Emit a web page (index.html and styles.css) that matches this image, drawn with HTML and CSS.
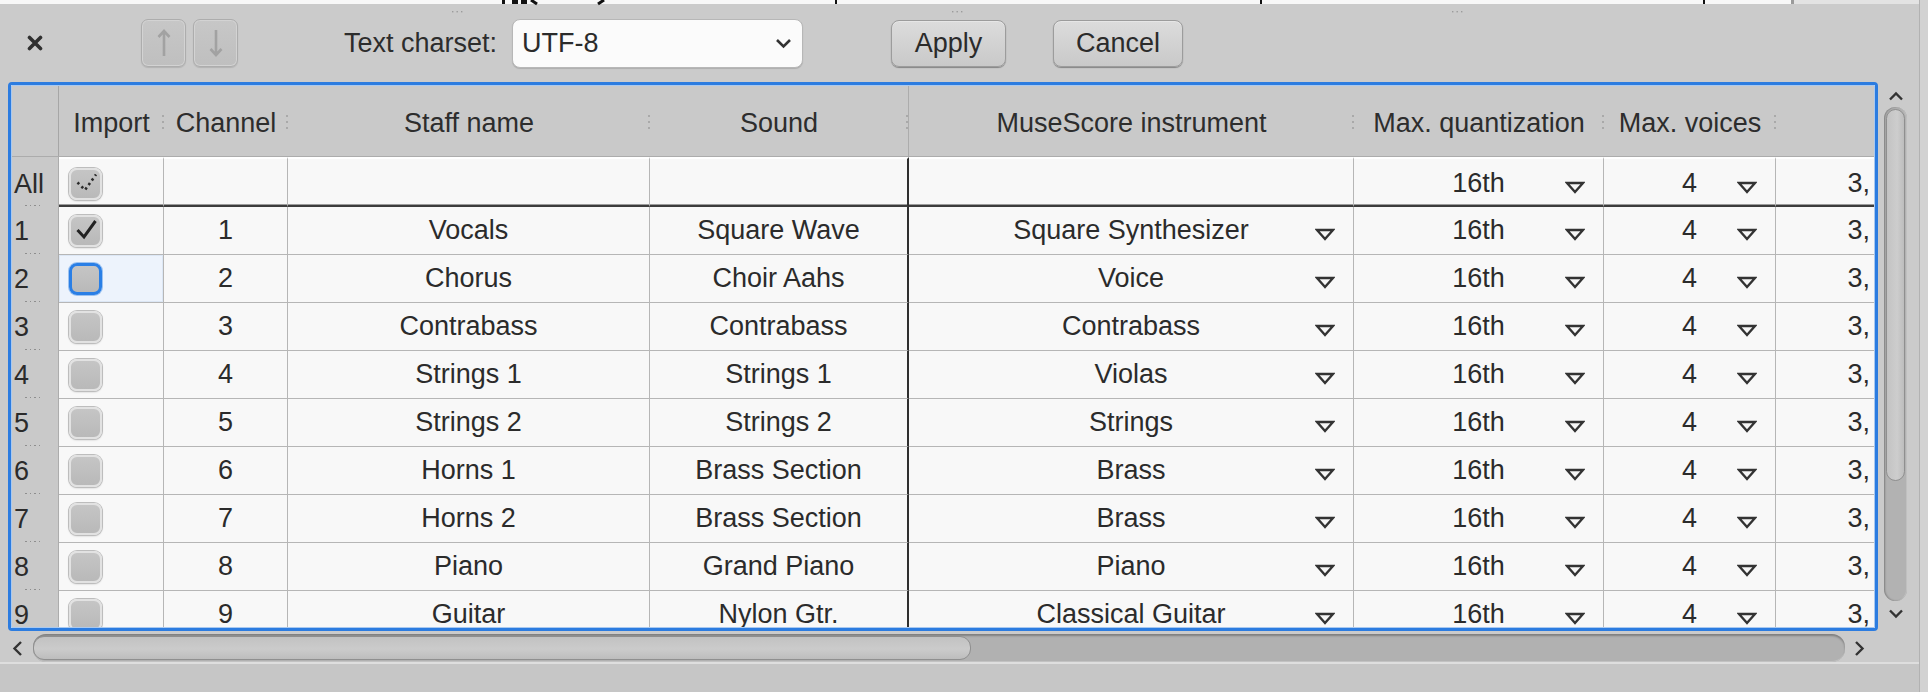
FILE: index.html
```html
<!DOCTYPE html>
<html>
<head>
<meta charset="utf-8">
<title>MIDI import</title>
<link rel="stylesheet" href="styles.css">
</head>
<body>
<div class="window">
  <div class="content">
    <svg class="topstrip" width="1919" height="14" viewBox="0 0 1919 14">
      <rect x="0" y="0" width="1792" height="4" fill="#f8f8f8"/>
      <rect x="1792" y="0" width="127" height="4" fill="#e3e3e3"/>
      <rect x="1791" y="0" width="3" height="4" fill="#9a9a9a"/>
      <rect x="502" y="0" width="3" height="4" fill="#111"/>
      <rect x="512" y="0" width="6" height="4" fill="#111"/>
      <rect x="521" y="0" width="6" height="4" fill="#111"/>
      <path d="M531 0 L537 4" stroke="#111" stroke-width="3"/>
      <path d="M604 0 L598 4" stroke="#111" stroke-width="3"/>
      <rect x="835" y="0" width="2" height="4" fill="#111"/>
      <rect x="1260" y="0" width="2" height="4" fill="#111"/>
      <rect x="1703" y="0" width="2" height="4" fill="#111"/>
      <g fill="#9c9c9c">
        <rect x="452" y="11" width="1.4" height="1.4"/><rect x="456.5" y="11" width="1.4" height="1.4"/><rect x="461" y="11" width="1.4" height="1.4"/>
        <rect x="952" y="11" width="1.4" height="1.4"/><rect x="956.5" y="11" width="1.4" height="1.4"/><rect x="961" y="11" width="1.4" height="1.4"/>
        <rect x="1452" y="11" width="1.4" height="1.4"/><rect x="1456.5" y="11" width="1.4" height="1.4"/><rect x="1461" y="11" width="1.4" height="1.4"/>
      </g>
    </svg>

    <div class="toolbar">
      <svg class="close" width="16" height="16" viewBox="0 0 16 16"><path d="M2.5 2.5 L13.5 13.5 M13.5 2.5 L2.5 13.5" stroke="#303030" stroke-width="3.6" stroke-linecap="round"/></svg>
      <div class="arrows">
        <div class="arrowbtn"><svg width="14" height="30" viewBox="0 0 14 30"><path d="M7 3 V28 M1.5 9 L7 3 L12.5 9" fill="none" stroke="#a2a2a2" stroke-width="2.6"/></svg></div>
        <div class="arrowbtn"><svg width="14" height="30" viewBox="0 0 14 30"><path d="M7 2 V27 M1.5 21 L7 27 L12.5 21" fill="none" stroke="#a2a2a2" stroke-width="2.6"/></svg></div>
      </div>
      <span class="label">Text charset:</span>
      <div class="combo"><span>UTF-8</span><svg width="17" height="11" viewBox="0 0 17 11"><path d="M2 2 L8.5 8.5 L15 2" fill="none" stroke="#333" stroke-width="2.6"/></svg></div>
      <div class="btn apply">Apply</div>
      <div class="btn cancel">Cancel</div>
    </div>

    <div class="main">
      <div class="frame">
        <div class="table">
          <div class="hrow">
            <div class="hc corner"></div>
            <div class="hc grip">Import</div>
            <div class="hc grip">Channel</div>
            <div class="hc grip">Staff name</div>
            <div class="hc grip line">Sound</div>
            <div class="hc grip">MuseScore instrument</div>
            <div class="hc grip">Max. quantization</div>
            <div class="hc grip">Max. voices</div>
            <div class="hc"></div>
          </div>

          <div class="row allrow">
            <div class="vh">All</div>
            <div class="c imp"><div class="cb"><svg width="27" height="27" viewBox="0 0 27 27"><path d="M5.5 12.5 L13 20 L24 4.5" fill="none" stroke="#2a2a2a" stroke-width="2.6" stroke-dasharray="2.4 3.2"/></svg></div></div>
            <div class="c"></div>
            <div class="c"></div>
            <div class="c snd"></div>
            <div class="c"></div>
            <div class="c dd"><span>16th</span><svg class="tri" width="20" height="13" viewBox="0 0 20 13"><polygon points="2,2 18,2 10,11" fill="#f6f6f6" stroke="#333" stroke-width="2.4"/></svg></div>
            <div class="c dd"><span>4</span><svg class="tri" width="20" height="13" viewBox="0 0 20 13"><polygon points="2,2 18,2 10,11" fill="#f6f6f6" stroke="#333" stroke-width="2.4"/></svg></div>
            <div class="c last">3,</div>
          </div>

          <div class="row">
            <div class="vh">1</div>
            <div class="c imp"><div class="cb"><svg width="27" height="27" viewBox="0 0 27 27"><path d="M5.5 13 L12 20 L23.5 4" fill="none" stroke="#222" stroke-width="3"/></svg></div></div>
            <div class="c">1</div>
            <div class="c">Vocals</div>
            <div class="c snd">Square Wave</div>
            <div class="c dd"><span>Square Synthesizer</span><svg class="tri" width="20" height="13" viewBox="0 0 20 13"><polygon points="2,2 18,2 10,11" fill="#f6f6f6" stroke="#333" stroke-width="2.4"/></svg></div>
            <div class="c dd"><span>16th</span><svg class="tri" width="20" height="13" viewBox="0 0 20 13"><polygon points="2,2 18,2 10,11" fill="#f6f6f6" stroke="#333" stroke-width="2.4"/></svg></div>
            <div class="c dd"><span>4</span><svg class="tri" width="20" height="13" viewBox="0 0 20 13"><polygon points="2,2 18,2 10,11" fill="#f6f6f6" stroke="#333" stroke-width="2.4"/></svg></div>
            <div class="c last">3,</div>
          </div>

          <div class="row">
            <div class="vh">2</div>
            <div class="c imp focus"><div class="cb cbfocus"></div></div>
            <div class="c">2</div>
            <div class="c">Chorus</div>
            <div class="c snd">Choir Aahs</div>
            <div class="c dd"><span>Voice</span><svg class="tri" width="20" height="13" viewBox="0 0 20 13"><polygon points="2,2 18,2 10,11" fill="#f6f6f6" stroke="#333" stroke-width="2.4"/></svg></div>
            <div class="c dd"><span>16th</span><svg class="tri" width="20" height="13" viewBox="0 0 20 13"><polygon points="2,2 18,2 10,11" fill="#f6f6f6" stroke="#333" stroke-width="2.4"/></svg></div>
            <div class="c dd"><span>4</span><svg class="tri" width="20" height="13" viewBox="0 0 20 13"><polygon points="2,2 18,2 10,11" fill="#f6f6f6" stroke="#333" stroke-width="2.4"/></svg></div>
            <div class="c last">3,</div>
          </div>

          <div class="row">
            <div class="vh">3</div>
            <div class="c imp"><div class="cb"></div></div>
            <div class="c">3</div>
            <div class="c">Contrabass</div>
            <div class="c snd">Contrabass</div>
            <div class="c dd"><span>Contrabass</span><svg class="tri" width="20" height="13" viewBox="0 0 20 13"><polygon points="2,2 18,2 10,11" fill="#f6f6f6" stroke="#333" stroke-width="2.4"/></svg></div>
            <div class="c dd"><span>16th</span><svg class="tri" width="20" height="13" viewBox="0 0 20 13"><polygon points="2,2 18,2 10,11" fill="#f6f6f6" stroke="#333" stroke-width="2.4"/></svg></div>
            <div class="c dd"><span>4</span><svg class="tri" width="20" height="13" viewBox="0 0 20 13"><polygon points="2,2 18,2 10,11" fill="#f6f6f6" stroke="#333" stroke-width="2.4"/></svg></div>
            <div class="c last">3,</div>
          </div>

          <div class="row">
            <div class="vh">4</div>
            <div class="c imp"><div class="cb"></div></div>
            <div class="c">4</div>
            <div class="c">Strings 1</div>
            <div class="c snd">Strings 1</div>
            <div class="c dd"><span>Violas</span><svg class="tri" width="20" height="13" viewBox="0 0 20 13"><polygon points="2,2 18,2 10,11" fill="#f6f6f6" stroke="#333" stroke-width="2.4"/></svg></div>
            <div class="c dd"><span>16th</span><svg class="tri" width="20" height="13" viewBox="0 0 20 13"><polygon points="2,2 18,2 10,11" fill="#f6f6f6" stroke="#333" stroke-width="2.4"/></svg></div>
            <div class="c dd"><span>4</span><svg class="tri" width="20" height="13" viewBox="0 0 20 13"><polygon points="2,2 18,2 10,11" fill="#f6f6f6" stroke="#333" stroke-width="2.4"/></svg></div>
            <div class="c last">3,</div>
          </div>

          <div class="row">
            <div class="vh">5</div>
            <div class="c imp"><div class="cb"></div></div>
            <div class="c">5</div>
            <div class="c">Strings 2</div>
            <div class="c snd">Strings 2</div>
            <div class="c dd"><span>Strings</span><svg class="tri" width="20" height="13" viewBox="0 0 20 13"><polygon points="2,2 18,2 10,11" fill="#f6f6f6" stroke="#333" stroke-width="2.4"/></svg></div>
            <div class="c dd"><span>16th</span><svg class="tri" width="20" height="13" viewBox="0 0 20 13"><polygon points="2,2 18,2 10,11" fill="#f6f6f6" stroke="#333" stroke-width="2.4"/></svg></div>
            <div class="c dd"><span>4</span><svg class="tri" width="20" height="13" viewBox="0 0 20 13"><polygon points="2,2 18,2 10,11" fill="#f6f6f6" stroke="#333" stroke-width="2.4"/></svg></div>
            <div class="c last">3,</div>
          </div>

          <div class="row">
            <div class="vh">6</div>
            <div class="c imp"><div class="cb"></div></div>
            <div class="c">6</div>
            <div class="c">Horns 1</div>
            <div class="c snd">Brass Section</div>
            <div class="c dd"><span>Brass</span><svg class="tri" width="20" height="13" viewBox="0 0 20 13"><polygon points="2,2 18,2 10,11" fill="#f6f6f6" stroke="#333" stroke-width="2.4"/></svg></div>
            <div class="c dd"><span>16th</span><svg class="tri" width="20" height="13" viewBox="0 0 20 13"><polygon points="2,2 18,2 10,11" fill="#f6f6f6" stroke="#333" stroke-width="2.4"/></svg></div>
            <div class="c dd"><span>4</span><svg class="tri" width="20" height="13" viewBox="0 0 20 13"><polygon points="2,2 18,2 10,11" fill="#f6f6f6" stroke="#333" stroke-width="2.4"/></svg></div>
            <div class="c last">3,</div>
          </div>

          <div class="row">
            <div class="vh">7</div>
            <div class="c imp"><div class="cb"></div></div>
            <div class="c">7</div>
            <div class="c">Horns 2</div>
            <div class="c snd">Brass Section</div>
            <div class="c dd"><span>Brass</span><svg class="tri" width="20" height="13" viewBox="0 0 20 13"><polygon points="2,2 18,2 10,11" fill="#f6f6f6" stroke="#333" stroke-width="2.4"/></svg></div>
            <div class="c dd"><span>16th</span><svg class="tri" width="20" height="13" viewBox="0 0 20 13"><polygon points="2,2 18,2 10,11" fill="#f6f6f6" stroke="#333" stroke-width="2.4"/></svg></div>
            <div class="c dd"><span>4</span><svg class="tri" width="20" height="13" viewBox="0 0 20 13"><polygon points="2,2 18,2 10,11" fill="#f6f6f6" stroke="#333" stroke-width="2.4"/></svg></div>
            <div class="c last">3,</div>
          </div>

          <div class="row">
            <div class="vh">8</div>
            <div class="c imp"><div class="cb"></div></div>
            <div class="c">8</div>
            <div class="c">Piano</div>
            <div class="c snd">Grand Piano</div>
            <div class="c dd"><span>Piano</span><svg class="tri" width="20" height="13" viewBox="0 0 20 13"><polygon points="2,2 18,2 10,11" fill="#f6f6f6" stroke="#333" stroke-width="2.4"/></svg></div>
            <div class="c dd"><span>16th</span><svg class="tri" width="20" height="13" viewBox="0 0 20 13"><polygon points="2,2 18,2 10,11" fill="#f6f6f6" stroke="#333" stroke-width="2.4"/></svg></div>
            <div class="c dd"><span>4</span><svg class="tri" width="20" height="13" viewBox="0 0 20 13"><polygon points="2,2 18,2 10,11" fill="#f6f6f6" stroke="#333" stroke-width="2.4"/></svg></div>
            <div class="c last">3,</div>
          </div>

          <div class="row">
            <div class="vh">9</div>
            <div class="c imp"><div class="cb"></div></div>
            <div class="c">9</div>
            <div class="c">Guitar</div>
            <div class="c snd">Nylon Gtr.</div>
            <div class="c dd"><span>Classical Guitar</span><svg class="tri" width="20" height="13" viewBox="0 0 20 13"><polygon points="2,2 18,2 10,11" fill="#f6f6f6" stroke="#333" stroke-width="2.4"/></svg></div>
            <div class="c dd"><span>16th</span><svg class="tri" width="20" height="13" viewBox="0 0 20 13"><polygon points="2,2 18,2 10,11" fill="#f6f6f6" stroke="#333" stroke-width="2.4"/></svg></div>
            <div class="c dd"><span>4</span><svg class="tri" width="20" height="13" viewBox="0 0 20 13"><polygon points="2,2 18,2 10,11" fill="#f6f6f6" stroke="#333" stroke-width="2.4"/></svg></div>
            <div class="c last">3,</div>
          </div>
        </div>
      </div>

      <div class="vscroll">
        <svg class="chev" width="16" height="10" viewBox="0 0 16 10"><path d="M2 8.5 L8 2.5 L14 8.5" fill="none" stroke="#333" stroke-width="2.4"/></svg>
        <div class="vtrack"><div class="vthumb"></div></div>
        <svg class="chev" width="16" height="10" viewBox="0 0 16 10"><path d="M2 1.5 L8 7.5 L14 1.5" fill="none" stroke="#333" stroke-width="2.4"/></svg>
      </div>
    </div>

    <div class="hscroll">
      <svg class="hchev left" width="11" height="17" viewBox="0 0 11 17"><path d="M9 2 L2.5 8.5 L9 15" fill="none" stroke="#333" stroke-width="2.4"/></svg>
      <div class="htrack"><div class="hthumb"></div></div>
      <svg class="hchev right" width="11" height="17" viewBox="0 0 11 17"><path d="M2 2 L8.5 8.5 L2 15" fill="none" stroke="#333" stroke-width="2.4"/></svg>
    </div>
    <div class="bottom"></div>
  </div>
  <div class="edge"></div>
</div>
</body>
</html>
```

FILE: styles.css
```css
* { box-sizing: border-box; }
html, body { margin: 0; padding: 0; }
body {
  width: 1928px;
  height: 692px;
  overflow: hidden;
  background: #cbcbcb;
  font-family: "Liberation Sans", Arial, sans-serif;
  font-size: 27px;
  color: #2b2b2b;
}
.window {
  display: flex;
  width: 1928px;
  height: 692px;
  background: #cbcbcb;
}
.content {
  position: relative;
  width: 1919px;
  height: 692px;
  display: flex;
  flex-direction: column;
}
.edge {
  width: 9px;
  height: 692px;
  border-left: 1px solid #b2b2b2;
  background: #d2d2d2;
}
.topstrip {
  position: absolute;
  left: 0;
  top: 0;
}

/* toolbar */
.toolbar {
  height: 82px;
  flex: none;
  padding-top: 4px;
  display: flex;
  align-items: center;
}
.close { margin-left: 27px; flex: none; }
.arrows {
  margin-left: 98px;
  display: flex;
  gap: 7px;
}
.arrowbtn {
  width: 45px;
  height: 48px;
  border: 1px solid #adadad;
  border-radius: 7px;
  background: linear-gradient(#c7c7c7, #bfbfbf);
  box-shadow: inset 0 0 0 1px #d3d3d3, 0 1px 1px rgba(0,0,0,0.12);
  display: flex;
  align-items: center;
  justify-content: center;
}
.label {
  margin-left: 106px;
  color: #2d2d2d;
}
.combo {
  margin-left: 15px;
  width: 291px;
  height: 49px;
  background: #fbfbfb;
  border: 1px solid #b7b7b7;
  border-radius: 8px;
  box-shadow: 0 1px 1px rgba(0,0,0,0.15);
  display: flex;
  align-items: center;
  justify-content: space-between;
  padding: 0 9px 0 9px;
}
.combo svg { margin-right: 1px; }
.btn {
  height: 47px;
  border: 1px solid #9c9c9c;
  border-radius: 8px;
  background: linear-gradient(#dcdcdc, #c9c9c9);
  box-shadow: 0 1px 1px rgba(0,0,0,0.35), inset 0 1px 0 #e6e6e6;
  display: flex;
  align-items: center;
  justify-content: center;
  color: #2b2b2b;
}
.apply { margin-left: 88px; width: 115px; }
.cancel { margin-left: 47px; width: 130px; }

/* main */
.main {
  height: 549px;
  flex: none;
  display: flex;
}
.frame {
  margin-left: 8px;
  width: 1870px;
  height: 549px;
  border: 3px solid #2c7ce0;
  border-radius: 4px;
  overflow: hidden;
  flex: none;
}
.table {
  height: 100%;
  border: 1px solid #a9c9f0;
  background: #f8f8f8;
  overflow: hidden;
}
.hrow, .row {
  display: grid;
  grid-template-columns: 47px 105px 124px 362px 259px 445px 250px 172px 98px;
}
.hrow {
  height: 71px;
  background: #c9c9c9;
  border-bottom: 1px solid #acacac;
}
.hc {
  position: relative;
  display: flex;
  align-items: center;
  justify-content: center;
  white-space: nowrap;
  color: #2d2d2d;
  padding-top: 5px;
}
.hc.corner { border-right: 1px solid #a6a6a6; }
.hc.line { border-right: 1px solid #acacac; }
.hc.grip::after {
  content: "";
  position: absolute;
  right: 0;
  top: 50%;
  margin-top: -6px;
  width: 2px;
  height: 16px;
  background: repeating-linear-gradient(to bottom, #a9a9a9 0 2px, transparent 2px 6px);
}

.row { height: 48px; }
.row.allrow { height: 50px; }
.vh {
  position: relative;
  background: #c9c9c9;
  border-right: 1px solid #acacac;
  display: flex;
  align-items: center;
  padding-left: 2px;
}
.allrow .vh { padding-top: 5px; }
.vh::after {
  content: "";
  position: absolute;
  left: 13px;
  bottom: 1px;
  width: 18px;
  height: 1.5px;
  background: repeating-linear-gradient(to right, #8e8e8e 0 1.5px, transparent 1.5px 4.5px);
}
.c {
  border-right: 1px solid #b6b6b6;
  border-bottom: 1px solid #b6b6b6;
  display: flex;
  align-items: center;
  justify-content: center;
  white-space: nowrap;
  overflow: hidden;
}
.allrow .c {
  border-top: 2px solid #ffffff;
  border-bottom: 2px solid #3c3c3c;
  box-shadow: inset 0 -1px 0 #9c9c9c;
  padding-top: 3px;
}
.c.snd { border-right: 2px solid #2f2f2f; }
.c.imp {
  justify-content: flex-start;
  padding-left: 10px;
}
.c.focus {
  background: #edf3fc;
  box-shadow: inset 0 0 0 1px #dce7f5;
}
.c.dd {
  display: grid;
  align-items: center;
  justify-content: stretch;
}
.c.dd > span, .c.dd > svg { grid-area: 1 / 1; }
.c.dd > span { justify-self: center; }
.c.dd > svg {
  justify-self: end;
  margin-right: 18px;
  margin-top: 8px;
}
.c.last {
  justify-content: flex-end;
  padding-right: 4px;
  border-right: none;
}

.cb {
  width: 33px;
  height: 32px;
  flex: none;
  border-radius: 8px;
  background: linear-gradient(#c5c5c5, #b9b9b9);
  border: 2px solid #e2e2e2;
  box-shadow: 0 0 0 1px #bdbdbd, 0 1px 2px rgba(0,0,0,0.25);
  display: flex;
  align-items: center;
  justify-content: center;
}
.cb svg { display: block; }
.cb.cbfocus {
  border: 3px solid #2a7fe6;
  box-shadow: 0 0 0 1px #9cc2f0;
}

/* vertical scrollbar */
.vscroll {
  width: 41px;
  flex: none;
  padding-left: 6px;
  display: flex;
  flex-direction: column;
  align-items: flex-start;
}
.vscroll .chev { margin-left: 4px; }
.vscroll .chev:first-child { margin-top: 9px; }
.vtrack {
  margin-top: 6px;
  width: 23px;
  height: 494px;
  border-radius: 12px;
  background: #b2b2b2;
  box-shadow: inset 1px 0 2px rgba(0,0,0,0.3), inset -1px 0 0 #c4c4c4;
  padding: 2px;
}
.vthumb {
  width: 19px;
  height: 372px;
  border-radius: 10px;
  border: 1px solid #8f8f8f;
  background: linear-gradient(to right, #c3c3c3, #cdcdcd 60%, #bdbdbd);
}
.vtrack + .chev { margin-top: 8px; }

/* horizontal scrollbar */
.hscroll {
  height: 31px;
  flex: none;
  padding-top: 3px;
  display: flex;
  align-items: center;
}
.hchev.left { margin-left: 12px; }
.htrack {
  margin-left: 10px;
  width: 1812px;
  height: 28px;
  border-radius: 13px;
  background: #b1b1b1;
  box-shadow: inset 0 2px 2px rgba(0,0,0,0.28), inset 0 -1px 0 #c2c2c2;
  padding: 2px 0 2px 0;
}
.hthumb {
  width: 938px;
  height: 24px;
  border-radius: 11px;
  border: 1px solid #8f8f8f;
  background: linear-gradient(#c2c2c2, #cbcbcb 55%, #bdbdbd);
}
.hchev.right { margin-left: 9px; }
.bottom {
  height: 30px;
  flex: none;
  border-top: 2px solid #dedede;
  background: #c6c6c6;
}
```
